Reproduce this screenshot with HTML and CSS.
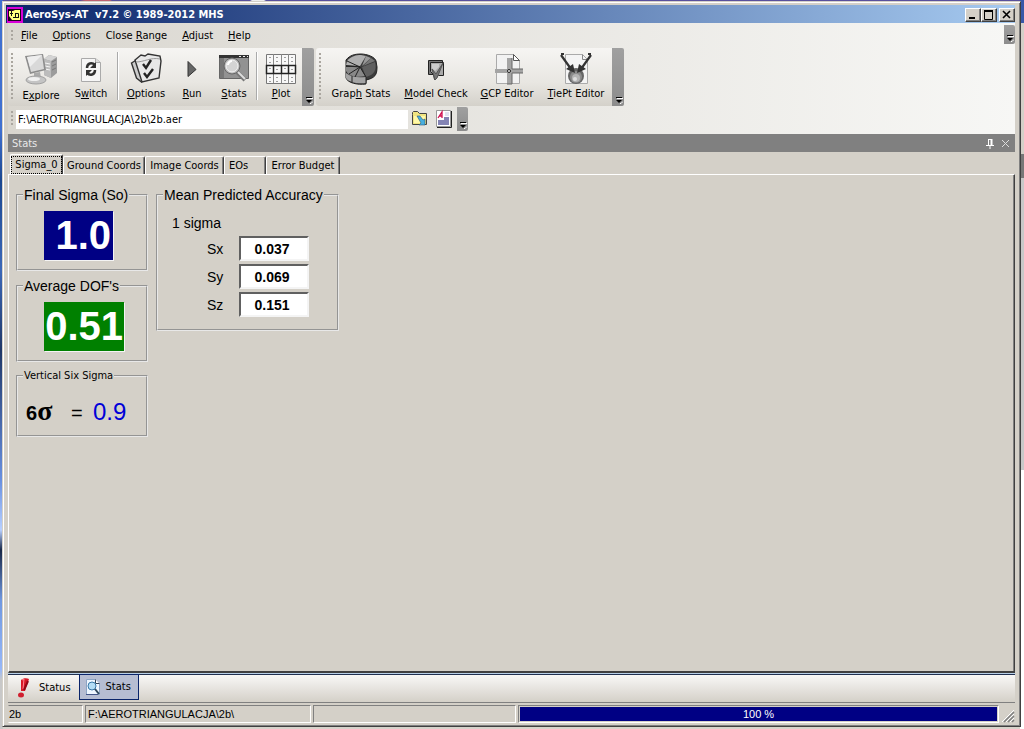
FILE: index.html
```html
<!DOCTYPE html>
<html lang="en">
<head>
<meta charset="utf-8">
<title>AeroSys-AT</title>
<link rel="stylesheet" href="styles.css">
</head>
<body>
<div class="window">
  <header class="titlebar">
    <svg class="app-icon" width="16" height="16" viewBox="0 0 16 16"><rect width="16" height="16" fill="#d800d8"/><rect x="1" y="2" width="13" height="12" fill="#200020"/><path d="M2 4h4l2-1h5v10H5l-3-4z" fill="#ffff80"/><path d="M3 6.500h3M4.500 4v5M6 10.500h6M8.500 6.500h3v4M8.500 10V6" fill="none" stroke="#111"/></svg>
    <h1 class="title">AeroSys-AT&nbsp; v7.2 © 1989-2012 MHS</h1>
    <div class="caption-buttons">
      <button class="cap" aria-label="Minimize"><svg width="12" height="10" viewBox="0 0 12 10"><path d="M2 8h6" stroke="#000" stroke-width="2"/></svg></button>
      <button class="cap" aria-label="Maximize"><svg width="12" height="10" viewBox="0 0 12 10"><path d="M1.500 1h8v8.500h-8z" fill="none" stroke="#000"/><path d="M1 1h9" stroke="#000" stroke-width="2"/></svg></button>
      <button class="cap close" aria-label="Close"><svg width="12" height="10" viewBox="0 0 12 10"><path d="M2 1l7 7M9 1L2 8" stroke="#000" stroke-width="1.600"/></svg></button>
    </div>
  </header>

  <div class="bars">
    <nav class="menubar">
      <span class="grip"></span>
      <button class="menu"><u>F</u>ile</button>
      <button class="menu"><u>O</u>ptions</button>
      <button class="menu">Close <u>R</u>ange</button>
      <button class="menu"><u>A</u>djust</button>
      <button class="menu"><u>H</u>elp</button>
      <button class="overflow" aria-label="More menus"><svg width="7" height="7" viewBox="0 0 7 7"><path d="M1 1.500h6M4 6.500h1l2-2" stroke="#fff" fill="none"/><path d="M0 .5h6" stroke="#000"/><path d="M0 3h6L3 6z"/></svg></button>
    </nav>

    <div class="toolrow">
      <div class="toolbar">
        <span class="grip"></span>
        <button class="tool w50"><svg width="34" height="34" viewBox="0 0 34 34"><path d="M20 6l5-4 8 2v16l-6 5-7-3z" fill="#9c9c9c"/><path d="M20 6l5-4 8 2-6 4z" fill="#d4d4d4"/><path d="M20 6l7 2v17l-7-3z" fill="#bcbcbc"/><path d="M21 10l5 1M21 13l5 1M21 16l5 1" stroke="#f4f4f4"/><path d="M28 9l4-2M28 13l4-2M28 17l4-2" stroke="#777"/><path d="M1 3l18-2 3 16-16 4z" fill="#8c8c8c"/><path d="M3 4l15-2 2 14-13 3z" fill="#d9d9d9"/><path d="M3 4l15-2L6 14z" fill="#eee"/><path d="M10 20l6-1 1 6h-7z" fill="#aaa"/><ellipse cx="12" cy="27" rx="10" ry="4" fill="#c4c4c4" stroke="#a0a0a0"/><ellipse cx="10" cy="26" rx="6" ry="2" fill="#f0f0f0"/></svg><span>E<u>x</u>plore</span></button>
        <button class="tool w50"><svg width="32" height="32" viewBox="0 0 32 32"><path d="M6.500 5.500h14l5 4v19h-19z" fill="#f6f6f6" stroke="#aaa"/><path d="M20.500 5.500v4h5" fill="#ddd" stroke="#aaa"/><path d="M12 15c0-5 5-6 8-3M20 17c0 5-5 6-8 3" fill="none" stroke="#333" stroke-width="2.500"/><path d="M21 9v6h-6zM11 23v-6h6z" fill="#333"/></svg><span>S<u>w</u>itch</span></button>
        <span class="sep"></span>
        <button class="tool w50"><svg width="32" height="32" viewBox="0 0 32 32"><path d="M1.500 10l5-3 3 1 5 18-3 3-5-4z" fill="#ccc" stroke="#333" stroke-width="1.400"/><path d="M5 7l6-5 4 1 3-2 12 2 1 5-2 17-17 4z" fill="#e8e8e8" stroke="#333" stroke-width="1.400"/><path d="M6 9c8 0 15-5 24-3" fill="none" stroke="#999"/><path d="M13 11l3 4 5-8M14 20l3 4 6-8" fill="none" stroke="#222" stroke-width="2.400"/></svg><span><u>O</u>ptions</span></button>
        <button class="tool w42"><svg width="32" height="32" viewBox="0 0 32 32"><path d="M12 8.500l8 8-8 7z" fill="#666" stroke="#333"/></svg><span><u>R</u>un</span></button>
        <button class="tool w42"><svg width="32" height="32" viewBox="0 0 32 32"><path d="M1.500 3.500h29v22h-29z" fill="#929292" stroke="#666"/><path d="M1 3.500h30" stroke="#333" stroke-width="3"/><path d="M21 3.500h2M25 3.500h2M29 3.500h1" stroke="#eee"/><path d="M2 5h4v20H2z" fill="#777"/><circle cx="14" cy="13" r="8" fill="#b4b4b4" stroke="#666"/><circle cx="14" cy="13" r="6" fill="#d4d4d4" stroke="#f4f4f4"/><path d="M10 12c0-2 2-4 4-4" stroke="#fff" stroke-width="2" fill="none"/><path d="M19 19l8 8" stroke="#777" stroke-width="4"/><path d="M20 19l7 7" stroke="#ddd" stroke-width="2"/></svg><span><u>S</u>tats</span></button>
        <span class="sep"></span>
        <button class="tool w42"><svg width="32" height="32" viewBox="0 0 32 32"><path d="M1.500 1.500h29v29h-29z" fill="#f8f8f8" stroke="#777"/><path d="M8.500 1v29M16.500 1v29M23.500 1v29" stroke="#888"/><path d="M1.500 12.500h29v8h-29zM8.500 12v9M16.500 12v9M23.500 12v9" fill="none" stroke="#222" stroke-width="1.500"/><path d="M5 4v1M12 4v1M20 4v1M27 4v1M5 9v1M12 8v1M20 8v1M27 8v1M5 15v1M12 16v1M20 15v1M27 16v1M5 24v1M12 24v1M20 27v1M27 24v1M5 28v1M12 28v1M27 28v1" stroke="#444"/></svg><span><u>P</u>lot</span></button>
        <button class="overflow" aria-label="Toolbar options"><svg width="7" height="7" viewBox="0 0 7 7"><path d="M1 1.500h6M4 6.500h1l2-2" stroke="#fff" fill="none"/><path d="M0 .5h6" stroke="#000"/><path d="M0 3h6L3 6z"/></svg></button>
      </div>
      <div class="toolbar">
        <span class="grip"></span>
        <button class="tool w74"><svg width="34" height="32" viewBox="0 0 34 32"><path d="M2 7c4-5 9-6 15-6s14 3 15 7l1 6c0 8-2 11-11 13v4c-9 1-18-1-20-6V13z" fill="#3c3c3c" stroke="#222"/><path d="M3 8c4-5 9-6 14-6l5 1-6 10-14-1z" fill="#b0b0b0"/><path d="M22 3l5 2-9 8z" fill="#999"/><path d="M27 5l4 3-12 5z" fill="#777"/><path d="M18 14l13-5c2 8-1 13-9 15z" fill="#606060"/><path d="M2 14l14 0 5 9c-9 2-16 0-19-5z" fill="#888"/><path d="M2 20c5 4 11 5 20 4v6c-9 1-18-1-20-5z" fill="#a4a4a4"/><path d="M2 13l14 1-11 7M16 14l-5 10M16 14l6 10v6M8 23v6M3 8l13 6" stroke="#222" fill="none"/></svg><span>Grap<u>h</u> Stats</span></button>
        <button class="tool w76"><svg width="32" height="32" viewBox="0 0 32 32"><path d="M8.500 7.500h14v14h-14z" fill="#777" stroke="#222"/><path d="M10.500 9.500h13v13h-5l-4 4-1-5-3-3z" fill="#aaa" stroke="#222"/><path d="M12 16l4 5 7-11-6 15-2 2z" fill="#777" stroke="#555"/><path d="M12 11h7v3l-4 4-3-3z" fill="#ccc"/></svg><span><u>M</u>odel Check</span></button>
        <button class="tool w66"><svg width="32" height="32" viewBox="0 0 32 32"><path d="M5.500 1.500h17l6 6v23h-23z" fill="#f2f2f2" stroke="#aaa"/><path d="M22.500 1.500v6h6z" fill="#fff" stroke="#555"/><path d="M16 5h5v11h11v4H21v11h-5V20H4v-4h12z" fill="#a4a4a4"/><path d="M21 5v11h11M32 20H21v11h-5" fill="none" stroke="#666"/><circle cx="18" cy="18" r="1.500" fill="#eee" stroke="#222"/></svg><span><u>G</u>CP Editor</span></button>
        <button class="tool w72"><svg width="34" height="32" viewBox="0 0 34 32"><path d="M6.500 1.500h17l5 5v24h-22z" fill="#f4f4f4" stroke="#aaa"/><path d="M23.500 1.500v5h5" fill="none" stroke="#888"/><circle cx="17" cy="23" r="8" fill="#666"/><circle cx="17" cy="24" r="6" fill="#8c8c8c"/><circle cx="17" cy="25" r="4" fill="#b4b4b4"/><circle cx="16" cy="26" r="2" fill="#ddd"/><path d="M2 2l10 14M32 2L22 16" stroke="#333" stroke-width="2.200"/><path d="M2 1h3M29 1h3" stroke="#333" stroke-width="2"/><path d="M7 16l7-5 2 9zM27 16l-7-5-2 9z" fill="#333"/></svg><span><u>T</u>iePt Editor</span></button>
        <button class="overflow" aria-label="Toolbar options"><svg width="7" height="7" viewBox="0 0 7 7"><path d="M1 1.500h6M4 6.500h1l2-2" stroke="#fff" fill="none"/><path d="M0 .5h6" stroke="#000"/><path d="M0 3h6L3 6z"/></svg></button>
      </div>
    </div>

    <div class="pathbar">
      <span class="grip"></span>
      <input class="path" type="text" aria-label="Project file" value="F:\AEROTRIANGULACJA\2b\2b.aer">
      <button class="mini" aria-label="Open folder"><svg width="18" height="18" viewBox="0 0 18 18"><path d="M1.500 4.500v-2l1-1h4l2 2h7v11h-14z" fill="#f0e480" stroke="#444"/><path d="M3 6h11v7H3z" fill="#fff8a8"/><path d="M6 6h3l3 4 2-1v6H8l2-2z" fill="#48b0e0" stroke="#285878" stroke-width=".6"/></svg></button>
      <button class="mini" aria-label="Report"><svg width="18" height="20" viewBox="0 0 18 20"><path d="M1.500 1.500h14v16h-14z" fill="#fff" stroke="#999"/><path d="M2 18.500h14.500V2" fill="none" stroke="#222"/><path d="M9 8h5v8H3v-5h6z" fill="#8484b4"/><path d="M10 4h4M10 6h4" stroke="#c4c4e0"/><path d="M3 9l4-6v6M4 7h3" fill="none" stroke="#d01050" stroke-width="1.300"/></svg></button>
      <button class="overflow" aria-label="Path bar options"><svg width="7" height="7" viewBox="0 0 7 7"><path d="M1 1.500h6M4 6.500h1l2-2" stroke="#fff" fill="none"/><path d="M0 .5h6" stroke="#000"/><path d="M0 3h6L3 6z"/></svg></button>
    </div>
  </div>

  <main class="dock">
    <div class="dock-title">
      <h2>Stats</h2>
      <button class="dock-btn" aria-label="Pin"><svg width="9" height="10" viewBox="0 0 9 10"><path d="M2.500 0v6M2 .5h4M0 6.500h8M4 7v3" stroke="#fff" fill="none"/><path d="M5.500 0v6" stroke="#fff" stroke-width="2"/></svg></button>
      <button class="dock-btn" aria-label="Close panel"><svg width="9" height="9" viewBox="0 0 9 9"><path d="M1 1l7 7M8 1L1 8" stroke="#ddd"/></svg></button>
    </div>
    <div class="tabs" role="tablist">
      <button class="tab selected" role="tab" aria-selected="true"><span>Sigma_0</span></button>
      <button class="tab w82" role="tab">Ground Coords</button>
      <button class="tab w80" role="tab">Image Coords</button>
      <button class="tab w42 left" role="tab">EOs</button>
      <button class="tab w74" role="tab">Error Budget</button>
    </div>
    <section class="page">
      <div class="column">
        <fieldset class="group tall">
          <legend>Final Sigma (So)</legend>
          <output class="big navy">1.0</output>
        </fieldset>
        <fieldset class="group tall">
          <legend>Average DOF's</legend>
          <output class="big green">0.51</output>
        </fieldset>
        <fieldset class="group six">
          <legend>Vertical Six Sigma</legend>
          <div class="sigma-row"><span class="six-label">6<b>σ</b></span><span class="equals">=</span><output class="blue">0.9</output></div>
        </fieldset>
      </div>
      <fieldset class="group accuracy">
        <legend>Mean Predicted Accuracy</legend>
        <p class="note">1 sigma</p>
        <div class="fields">
          <label for="sx">Sx</label><input id="sx" type="text" value="0.037">
          <label for="sy">Sy</label><input id="sy" type="text" value="0.069">
          <label for="sz">Sz</label><input id="sz" type="text" value="0.151">
        </div>
      </fieldset>
    </section>
  </main>

  <div class="bottom-tabs">
    <button class="btab status"><svg width="14" height="20" viewBox="0 0 14 20"><path d="M4 2c2-2 6-2 8-1L8 13H4z" fill="#d81828"/><path d="M5 2l2-1-1 10" fill="none" stroke="#ff8890"/><path d="M11 3L7 12" stroke="#900818" stroke-width="2"/><ellipse cx="4" cy="17" rx="3" ry="2.500" fill="#d02030"/></svg>Status</button>
    <button class="btab active"><svg width="16" height="18" viewBox="0 0 16 18"><path d="M1.500 1.500h9l4 4v11h-13z" fill="#eef6ff" stroke="#8ca4c4"/><path d="M10.500 1.500v4h4" fill="#fff" stroke="#345"/><circle cx="7" cy="8" r="4" fill="#b4ddf5" stroke="#3878a8"/><path d="M10 11l4 5" stroke="#30485c" stroke-width="2"/><path d="M1 16.500h12" stroke="#458"/></svg>Stats</button>
  </div>

  <footer class="statusbar">
    <span class="panel p-name">2b</span>
    <span class="panel p-path">F:\AEROTRIANGULACJA\2b\</span>
    <span class="panel p-empty"></span>
    <div class="panel p-progress"><div class="progress" role="progressbar" aria-label="Progress" aria-valuenow="100">100 %</div></div>
    <svg class="sizer" width="14" height="14" viewBox="0 0 14 14"><path d="M3 13L13 3M7 13l6-6M11 13l2-2" stroke="#808080" stroke-width="1.500"/><path d="M1 13L13 1M5 13l8-8M9 13l4-4" stroke="#fff"/></svg>
  </footer>
</div>
</body>
</html>
```

FILE: styles.css
```css
* { box-sizing: border-box; }

body {
  margin: 0;
  height: 100vh;
  padding: 1px 3px 2px 2px;
  font: 11px/14px "DejaVu Sans Condensed", "Noto Sans", sans-serif;
  color: #000;
  background:
    linear-gradient(#3858a8 0 23px, #d4d0c8 23px 154px, #777 154px 178px, #c8c8c8 178px 470px, #fff 470px) right / 4px 100% no-repeat,
    linear-gradient(#4070d0 0 130px, #1c4890 180px, #3c68b8 270px, #203868 350px, #6890e0 480px, #b8d0ff 530px, #182848 550px, #7098e0 600px, #98b8f8 670px, #c8c8c8 680px) left / 3px 100% no-repeat,
    linear-gradient(90deg, #58509c 0 80px, #c06070 85px 110px, #58509c 112px 250px, #eee 252px 264px, #58509c 266px) top / 100% 3px no-repeat,
    #d8d4cc;
}

button, input { font: inherit; color: inherit; }
button { border: 0; padding: 0; background: none; }
h1, h2, p { margin: 0; }
svg { display: block; flex: none; }

.window {
  height: 100%;
  display: flex;
  flex-direction: column;
  background: #d4d0c8;
  border: 1px solid #d4d0c8;
  border-right: 1px solid #404040;
  border-bottom: 1px solid #404040;
  box-shadow: inset 1px 1px #fff, inset -1px -1px #808080;
  padding: 3px 5px 3px 3px;
}

.titlebar {
  flex: none;
  height: 18px;
  display: flex;
  align-items: center;
  gap: 2px;
  padding: 1px 0 0 1px;
  background: linear-gradient(90deg, #0a246a, #a6caf0);
}
.title { flex: 1; color: #fff; font: bold 11px/14px "DejaVu Sans Condensed", "Noto Sans", sans-serif; }
.caption-buttons { display: flex; }
.cap {
  width: 16px;
  height: 14px;
  display: flex;
  justify-content: center;
  align-items: center;
  background: #d4d0c8;
  border: 1px solid;
  border-color: #fff #404040 #404040 #fff;
  box-shadow: inset -1px -1px #808080;
}
.close { margin-left: 2px; }

.bars {
  flex: none;
  margin-left: 2px;
  background: linear-gradient(90deg, #d9d6cf, #f7f7f5);
}
.grip {
  flex: none;
  width: 8px;
  margin: 5px 0 7px;
  background: repeating-linear-gradient(#aaa69f 0 2px, transparent 2px 4px) 3px 0 / 2px 100% no-repeat;
}
.menubar { display: flex; height: 25px; }
.menubar .grip { margin: 7px 0 6px; }
.menu { padding: 0 7px 0 8px; }
.menubar .grip + .menu { padding-left: 5px; }
.menubar .overflow { margin: 2px 0 4px auto; }

.overflow {
  width: 11px;
  display: flex;
  align-items: flex-end;
  justify-content: center;
  padding: 0 0 2px 2px;
  background: linear-gradient(#a0a0a0, #8c8c8c);
  border-radius: 0 2px 2px 0;
}
.toolrow { display: flex; gap: 2px; height: 58px; }
.toolbar {
  display: flex;
  border-radius: 3px;
  background: linear-gradient(#f6f5f3, #e8e6e1 60%, #d4d1ca);
}
.tool {
  display: flex;
  flex-direction: column;
  align-items: center;
  gap: 2px;
  padding-top: 5px;
  white-space: nowrap;
}
.sep { width: 5px; margin: 4px 0 6px; background: linear-gradient(90deg, transparent 1px, #aaa 1px 2px, #fff 2px 3px, transparent 3px); }
.w42 { width: 42px; }
.w50 { width: 50px; }
.w66 { width: 66px; }
.w72 { width: 72px; }
.w74 { width: 74px; }
.w76 { width: 76px; }
.toolbar .overflow { width: 12px; }

.pathbar { display: flex; align-items: center; height: 28px; padding-bottom: 2px; }
.pathbar .grip { height: 16px; margin: 0; }
.path { width: 392px; height: 19px; border: 0; padding: 0 2px; background: #fff; }
.mini { width: 24px; height: 22px; display: flex; align-items: center; justify-content: center; }
.pathbar .overflow { height: 24px; margin-left: 1px; }

.dock { flex: 1; min-height: 0; display: flex; flex-direction: column; margin-left: 2px; }
.dock-title {
  flex: none;
  height: 18px;
  display: flex;
  align-items: center;
  gap: 6px;
  padding: 1px 5px 0 4px;
  background: #808080;
  color: #e8e8e8;
}
.dock-title h2 { flex: 1; font: inherit; }

.tabs { flex: none; display: flex; align-items: flex-end; height: 22px; padding-left: 2px; }
.tab {
  height: 18px;
  padding: 1px 1px 0;
  border: 1px solid;
  border-color: #fff #404040 transparent #fff;
  border-bottom: 0;
  border-radius: 2px 2px 0 0;
  box-shadow: inset -1px 0 #808080;
  white-space: nowrap;
}
.tab.selected { width: 53px; height: 20px; padding: 1px; }
.tab.selected span { display: block; outline: 1px dotted #000; line-height: 16px; }
.tab.left { text-align: left; padding-left: 4px; }
.tab.w82 { width: 82px; }
.tab.w80 { width: 79px; }
.tab.w74 { width: 74px; }

.page {
  flex: 1;
  display: flex;
  align-items: flex-start;
  gap: 8px;
  padding: 12px 7px;
  border: 1px solid;
  border-color: #fff #404040 #404040 #fff;
  border-bottom-width: 2px;
  box-shadow: inset -1px 0 #808080;
}
.column { width: 132px; display: flex; flex-direction: column; gap: 7px; }
.group {
  min-width: 0;
  margin: 0;
  border: 2px groove #e8e8e8;
  padding: 0 5px;
  font: 14px/16px "Liberation Sans", Arial, sans-serif;
}
.group legend { padding: 0 1px; white-space: nowrap; }
.tall { height: 84px; }
.big {
  display: block;
  height: 49px;
  margin: 8px 0 0 21px;
  color: #fff;
  font-size: 40px;
  font-weight: bold;
  line-height: 49px;
  text-align: right;
  box-shadow: 1px 1px #f4f4f4;
}
.navy { width: 69px; padding-right: 2px; background: #000084; }
.green { width: 80px; padding-right: 1px; background: #008000; }
.six { height: 68px; }
.six legend { font: 11px/14px "DejaVu Sans Condensed", "Noto Sans", sans-serif; }
.sigma-row { display: flex; align-items: baseline; padding: 16px 0 0 3px; }
.six-label { width: 45px; font-size: 20px; line-height: 24px; font-weight: bold; }
.six-label b { font: bold 28px/24px "Liberation Serif", serif; }
.equals { width: 22px; font-size: 20px; }
.blue { color: #0000d8; font-size: 24px; }

.accuracy { width: 183px; height: 144px; }
.note { padding: 12px 0 0 9px; }
.fields {
  display: grid;
  grid-template-columns: 32px 70px;
  row-gap: 3px;
  align-items: center;
  padding: 5px 0 0 44px;
}
.fields input {
  width: 100%;
  height: 25px;
  padding: 0 4px 0 0;
  border: 2px solid;
  border-color: #606060 #f4f4f4 #f4f4f4 #606060;
  background: #fff;
  text-align: center;
  font: bold 14px/16px "Liberation Sans", Arial, sans-serif;
}

.bottom-tabs {
  flex: none;
  display: flex;
  height: 30px;
  margin-left: 2px;
  padding-bottom: 2px;
  border-top: 1px solid #b8d0e8;
  border-bottom: 1px solid #808080;
  box-shadow: inset 0 1px #203050;
  background: linear-gradient(#faf9f8, #d4d0c8);
}
.btab { display: flex; align-items: center; gap: 8px; padding: 1px 8px 0 9px; }
.btab.active {
  gap: 5px;
  padding: 0 7px 0 5px;
  border: 1px solid #0a246a;
  background: #b6bdd2;
}

.statusbar { flex: none; display: flex; gap: 2px; height: 20px; padding-top: 2px; margin-left: 2px; }
.panel {
  border: 1px solid;
  border-color: #808080 #fff #fff #808080;
  padding: 0 2px;
  line-height: 16px;
  font-family: "Liberation Sans", Arial, sans-serif;
  font-size: 11px;
}
.p-name { width: 75px; border-left-color: transparent; padding-left: 0; }
.p-path { width: 226px; }
.p-empty { width: 203px; }
.p-progress { flex: 1; padding: 1px; }
.progress { height: 100%; background: #000084; color: #fff; text-align: center; line-height: 14px; }
.sizer { align-self: flex-end; }
```
